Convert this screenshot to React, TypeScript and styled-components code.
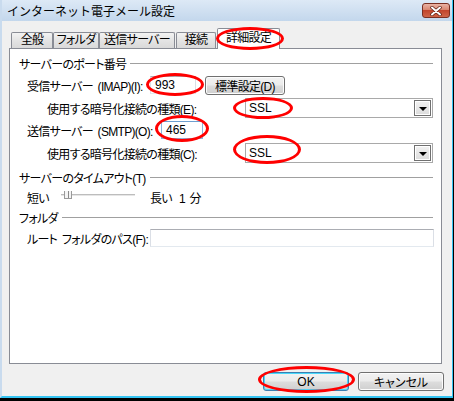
import React from 'react'
import styled, { createGlobalStyle } from 'styled-components'

const GlobalStyle = createGlobalStyle`
  html, body {
    margin: 0;
    padding: 0;
    background: #000;
  }
  body {
    font-family: "Liberation Sans", "Noto Sans CJK JP", sans-serif;
    font-size: 12px;
    font-feature-settings: "palt" 1;
    color: #000;
  }
`

const Window = styled.div`
  position: relative;
  width: 454px;
  height: 401px;
  box-sizing: border-box;
  padding: 0 1px 3px 0;
  background: #000;
`

const Frame = styled.div`
  height: 100%;
  box-sizing: border-box;
  display: flex;
  flex-direction: column;
  background: #f0f0f0;
  border-left: 2px solid #c9dbee;
  border-right: 1px solid #35c4f2;
  border-bottom: 2px solid #35c4f2;
`

const TitleBar = styled.div`
  height: 21px;
  display: flex;
  align-items: flex-start;
  padding-left: 5px;
  background: linear-gradient(to bottom, #dde9f6, #c3d7ec);
`

const Title = styled.span`
  font-family: "Noto Sans CJK JP", sans-serif;
  font-feature-settings: normal;
  font-size: 12px;
  line-height: 21px;
  color: #000;
`

const CloseButton = styled.div`
  margin: 3px 2px 0 auto;
  width: 28px;
  height: 15px;
  box-sizing: border-box;
  border: 1px solid #7a2f22;
  border-radius: 3px;
  background: linear-gradient(to bottom, #eab3a4 0%, #d98670 45%, #c2452c 50%, #cf6548 100%);
  display: flex;
  align-items: center;
  justify-content: center;
`

const Body = styled.div`
  flex: 1;
  display: flex;
  flex-direction: column;
  padding: 7px 10px 0 7px;
  letter-spacing: -0.7px;
  word-spacing: 2px;
`

const TabStrip = styled.div`
  display: flex;
  align-items: flex-end;
  padding-left: 2px;
  height: 20px;
  position: relative;
  z-index: 1;
`

const Tab = styled.div<{ $active?: boolean; $w: number; $ml?: number }>`
  box-sizing: border-box;
  width: ${p => p.$w}px;
  height: ${p => (p.$active ? 21 : 16)}px;
  margin-bottom: ${p => (p.$active ? -1 : 0)}px;
  margin-left: ${p => p.$ml ?? 0}px;
  padding-bottom: ${p => (p.$active ? 2 : 0)}px;
  border: 1px solid #898c95;
  border-bottom: none;
  border-radius: 2px 2px 0 0;
  background: ${p => (p.$active ? '#fff' : 'linear-gradient(to bottom, #f3f3f3, #e4e4e4 50%, #d9d9d9)')};
  display: flex;
  align-items: center;
  justify-content: center;
  line-height: 15px;
  white-space: nowrap;
`

const Panel = styled.div`
  height: 316px;
  box-sizing: border-box;
  border: 1px solid #898c95;
  background: #fff;
  padding: 6px 8px 0 9px;
  display: flex;
  flex-direction: column;
`

const GroupHeader = styled.div<{ $mt?: number }>`
  height: 16px;
  margin-top: ${p => p.$mt ?? 0}px;
  display: flex;
  align-items: center;
  white-space: nowrap;
  &::after {
    content: '';
    flex: 1;
    height: 1px;
    margin-left: 4px;
    background: #a0a0a0;
  }
`

const Row = styled.div<{ $mt?: number; $indent?: number; $h?: number }>`
  height: ${p => p.$h ?? 22}px;
  margin-top: ${p => p.$mt ?? 0}px;
  padding-left: ${p => p.$indent ?? 8}px;
  display: flex;
  align-items: center;
  white-space: nowrap;
`

const Label = styled.span<{ $w?: number; $ml?: number }>`
  ${p => (p.$w ? `width: ${p.$w}px; flex: none;` : '')}
  margin-left: ${p => p.$ml ?? 0}px;
`

const TextBox = styled.div<{ $w?: number; $focus?: boolean }>`
  box-sizing: border-box;
  height: 18px;
  ${p => (p.$w ? `width: ${p.$w}px;` : 'flex: 1; margin-right: -1px;')}
  margin-left: 5px;
  border: 1px solid ${p => (p.$focus ? '#6e9fd0' : '#abadb3')};
  border-left-color: ${p => (p.$focus ? '#8ab4de' : '#dbdfe6')};
  border-right-color: ${p => (p.$focus ? '#8ab4de' : '#dbdfe6')};
  border-bottom-color: ${p => (p.$focus ? '#8ab4de' : '#e3e9ef')};
  padding-left: 4px;
  line-height: 16px;
  letter-spacing: 0;
  background: #fff;
`

const PushButton = styled.div<{ $w: number; $default?: boolean; $ml?: number }>`
  box-sizing: border-box;
  width: ${p => p.$w}px;
  height: 19px;
  margin-left: ${p => p.$ml ?? 0}px;
  border: 1px solid ${p => (p.$default ? '#3c7fb1' : '#707070')};
  border-radius: 3px;
  background: linear-gradient(to bottom, #f2f2f2 0%, #ebebeb 48%, #dddddd 52%, #cfcfcf 100%);
  box-shadow: inset 0 0 0 1px ${p => (p.$default ? '#48d8fb' : '#fcfcfc')};
  display: flex;
  align-items: center;
  justify-content: center;
  white-space: nowrap;
`

const Select = styled.div`
  box-sizing: border-box;
  width: 188px;
  height: 20px;
  border: 1px solid #a9a9a9;
  background: #fff;
  display: flex;
  align-items: center;
  padding: 0 1px 0 3px;
  letter-spacing: 0;
`

const SelectValue = styled.span`
  flex: 1;
`

const DropButton = styled.div`
  box-sizing: border-box;
  width: 17px;
  height: 16px;
  border: 1px solid #707070;
  background: linear-gradient(to bottom, #f2f2f2, #dcdcdc);
  box-shadow: inset 0 0 0 1px #fff;
  display: flex;
  align-items: center;
  justify-content: center;
  &::after {
    content: '';
    border-left: 4px solid transparent;
    border-right: 4px solid transparent;
    border-top: 4px solid #000;
    margin-top: 2px;
  }
`

const Slider = styled.div`
  position: relative;
  width: 74px;
  height: 12px;
  margin: 0 15px 0 12px;
  &::before {
    content: '';
    position: absolute;
    left: 0;
    right: 0;
    top: 3px;
    height: 1px;
    background: #bdbdbd;
    border-bottom: 1px solid #e6e6e6;
  }
`

const Thumb = styled.div`
  position: absolute;
  left: 3px;
  top: 0;
  width: 8px;
  height: 8px;
  box-sizing: border-box;
  border: 1px solid #9a9a9a;
  border-top: none;
  background: #f4f4f4;
  &::after {
    content: '';
    position: absolute;
    left: 3px;
    top: 0;
    width: 1px;
    height: 7px;
    background: #8a8a8a;
  }
`

const Footer = styled.div`
  display: flex;
  justify-content: flex-end;
  gap: 9px;
  padding-top: 8px;
  margin-right: -2px;
  letter-spacing: 0;
`

const Ellipse = styled.div<{ $x: number; $y: number; $w: number; $h: number }>`
  position: absolute;
  z-index: 5;
  left: ${p => p.$x}px;
  top: ${p => p.$y}px;
  width: ${p => p.$w}px;
  height: ${p => p.$h}px;
  box-sizing: border-box;
  border: 3px solid #f00;
  border-radius: 50%;
  pointer-events: none;
`

const CloseGlyph = () => (
  <svg width="14" height="10" viewBox="0 0 14 10">
    <path d="M3 1.5 L11 8.5 M11 1.5 L3 8.5" stroke="#5a1d12" strokeWidth="3.4" strokeLinecap="round" />
    <path d="M3 1.5 L11 8.5 M11 1.5 L3 8.5" stroke="#fff" strokeWidth="2" strokeLinecap="round" />
  </svg>
)

export default function App() {
  return (
    <>
      <GlobalStyle />
      <Window>
        <Frame>
          <TitleBar>
            <Title>インターネット電子メール設定</Title>
            <CloseButton>
              <CloseGlyph />
            </CloseButton>
          </TitleBar>
          <Body>
            <TabStrip>
              <Tab $w={42}>全般</Tab>
              <Tab $w={46}>フォルダ</Tab>
              <Tab $w={76}>送信サーバー</Tab>
              <Tab $w={40} $ml={1}>接続</Tab>
              <Tab $w={63} $ml={1} $active>詳細設定</Tab>
            </TabStrip>
            <Panel>
              <GroupHeader>サーバーのポート番号</GroupHeader>
              <Row $mt={3}>
                <Label $w={118}>受信サーバー (IMAP)(I):</Label>
                <TextBox $w={46}>993</TextBox>
                <PushButton $w={80} $ml={9}>標準設定(D)</PushButton>
              </Row>
              <Row $mt={1} $indent={28}>
                <Label $w={198}>使用する暗号化接続の種類(E):</Label>
                <Select>
                  <SelectValue>SSL</SelectValue>
                  <DropButton />
                </Select>
              </Row>
              <Row>
                <Label $w={129}>送信サーバー (SMTP)(O):</Label>
                <TextBox $w={42} $focus>465</TextBox>
              </Row>
              <Row $mt={1} $indent={28}>
                <Label $w={198}>使用する暗号化接続の種類(C):</Label>
                <Select>
                  <SelectValue>SSL</SelectValue>
                  <DropButton />
                </Select>
              </Row>
              <GroupHeader $mt={5}>サーバーのタイムアウト(T)</GroupHeader>
              <Row $mt={2} $h={20}>
                <Label>短い</Label>
                <Slider>
                  <Thumb />
                </Slider>
                <Label>長い</Label>
                <Label $ml={7}>1 分</Label>
              </Row>
              <GroupHeader $mt={2}>フォルダ</GroupHeader>
              <Row $mt={2}>
                <Label $w={118}>ルート フォルダのパス(F):</Label>
                <TextBox />
              </Row>
            </Panel>
            <Footer>
              <PushButton $w={86} $default>OK</PushButton>
              <PushButton $w={86}>キャンセル</PushButton>
            </Footer>
          </Body>
        </Frame>
        <Ellipse $x={216} $y={27} $w={68} $h={23} />
        <Ellipse $x={146} $y={73} $w={58} $h={23} />
        <Ellipse $x={233} $y={97} $w={60} $h={22} />
        <Ellipse $x={155} $y={115} $w={54} $h={27} />
        <Ellipse $x={233} $y={135} $w={68} $h={29} />
        <Ellipse $x={258} $y={366} $w={97} $h={27} />
      </Window>
    </>
  )
}
